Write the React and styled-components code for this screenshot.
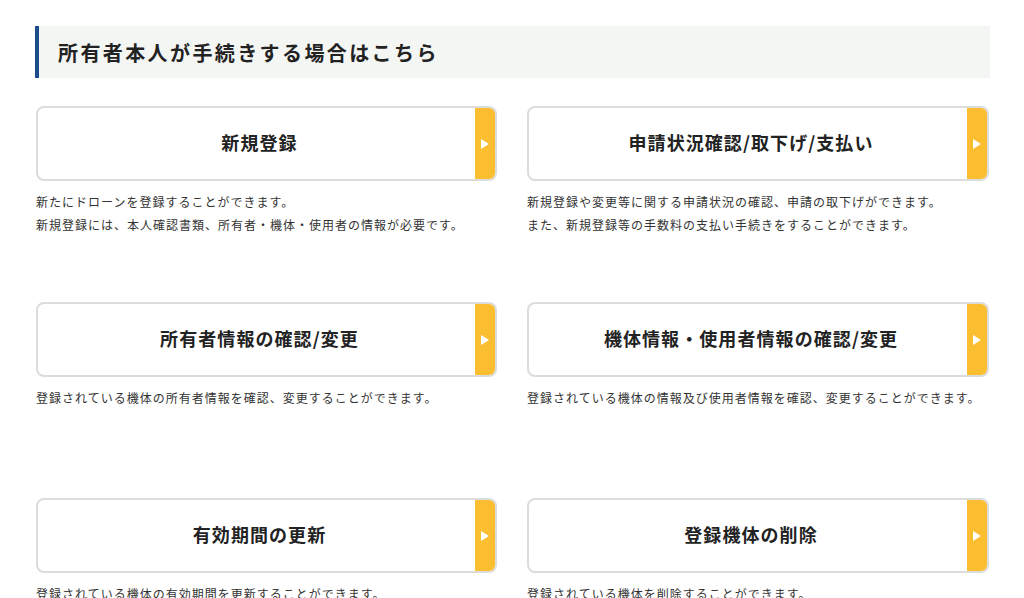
import React from 'react';
import styled, { createGlobalStyle } from 'styled-components';

const GlobalStyle = createGlobalStyle`
  body {
    margin: 0;
    background: #fff;
    font-family: "Noto Sans CJK JP", "Noto Sans", sans-serif;
    color: #222;
  }
`;

const items = [
  {
    title: '新規登録',
    notes: [
      '新たにドローンを登録することができます。',
      '新規登録には、本人確認書類、所有者・機体・使用者の情報が必要です。',
    ],
  },
  {
    title: '申請状況確認/取下げ/支払い',
    notes: [
      '新規登録や変更等に関する申請状況の確認、申請の取下げができます。',
      'また、新規登録等の手数料の支払い手続きをすることができます。',
    ],
  },
  {
    title: '所有者情報の確認/変更',
    notes: ['登録されている機体の所有者情報を確認、変更することができます。'],
  },
  {
    title: '機体情報・使用者情報の確認/変更',
    notes: ['登録されている機体の情報及び使用者情報を確認、変更することができます。'],
  },
  {
    title: '有効期間の更新',
    notes: ['登録されている機体の有効期間を更新することができます。'],
  },
  {
    title: '登録機体の削除',
    notes: ['登録されている機体を削除することができます。'],
  },
];

const App = () => {
  return (
    <Page>
      <GlobalStyle />
      <Heading>所有者本人が手続きする場合はこちら</Heading>
      <Grid>
        {items.map((item) => (
          <Cell key={item.title}>
            <Card href="#">
              <CardTitle>{item.title}</CardTitle>
              <Strip>
                <svg width="8" height="10" viewBox="0 0 8 10">
                  <path d="M0 0 L8 5 L0 10 Z" fill="#fff" />
                </svg>
              </Strip>
            </Card>
            <Notes>
              {item.notes.map((n) => (
                <p key={n}>{n}</p>
              ))}
            </Notes>
          </Cell>
        ))}
      </Grid>
    </Page>
  );
};

const Page = styled.div`
  width: 955px;
  padding: 26px 0 0 35px;
`;

const Heading = styled.h2`
  margin: 0;
  height: 52px;
  display: flex;
  align-items: center;
  padding-left: 19px;
  border-left: 4px solid #1d4c8a;
  background: #f4f6f4;
  font-size: 20px;
  font-weight: 700;
  letter-spacing: 2.4px;
  color: #222;
`;

const Grid = styled.div`
  display: grid;
  grid-template-columns: 461px 462px;
  column-gap: 30px;
  row-gap: 30px;
  margin-top: 28px;
  padding-left: 1px;
`;

const Cell = styled.div`
  min-height: 166px;
`;

const Card = styled.a`
  display: flex;
  height: 75px;
  box-sizing: border-box;
  border: 2px solid #dcdcdc;
  border-radius: 8px;
  overflow: hidden;
  text-decoration: none;
  color: #222;
  background: #fff;
`;

const CardTitle = styled.div`
  flex: 1;
  display: flex;
  align-items: center;
  justify-content: center;
  padding: 0 0 3px 6px;
  font-size: 18px;
  font-weight: 700;
  letter-spacing: 0.06em;
`;

const Strip = styled.div`
  width: 20px;
  background: #fbbe31;
  display: flex;
  align-items: center;
  justify-content: center;
`;

const Notes = styled.div`
  margin-top: 9px;
  p {
    margin: 0;
    font-size: 12px;
    line-height: 23px;
    letter-spacing: 1px;
    color: #333;
  }
`;

export default App;
